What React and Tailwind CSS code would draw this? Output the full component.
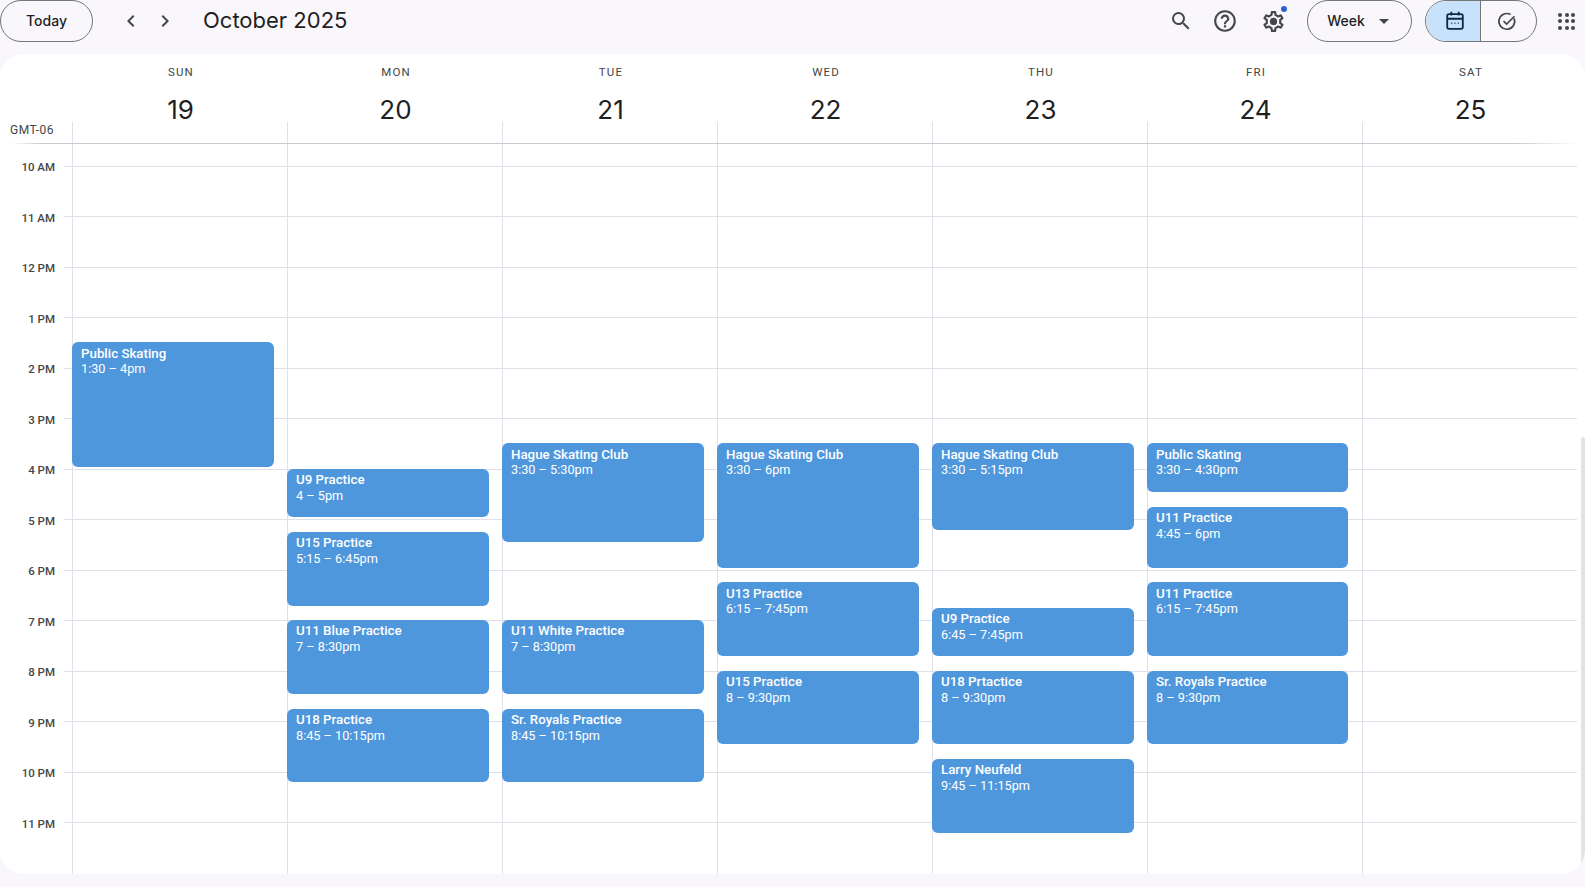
import React from "react";
import { MdChevronLeft, MdChevronRight, MdArrowDropDown, MdHelpOutline } from "react-icons/md";

const sans = "font-['Roboto','Liberation_Sans',sans-serif]";
const display = "font-['Inter','Liberation_Sans',sans-serif]";

const days = [
  { name: "SUN", num: 19, events: [{ title: "Public Skating", time: "1:30 – 4pm", from: 13.5, to: 16 }] },
  {
    name: "MON",
    num: 20,
    events: [
      { title: "U9 Practice", time: "4 – 5pm", from: 16, to: 17 },
      { title: "U15 Practice", time: "5:15 – 6:45pm", from: 17.25, to: 18.75 },
      { title: "U11 Blue Practice", time: "7 – 8:30pm", from: 19, to: 20.5 },
      { title: "U18 Practice", time: "8:45 – 10:15pm", from: 20.75, to: 22.25 },
    ],
  },
  {
    name: "TUE",
    num: 21,
    events: [
      { title: "Hague Skating Club", time: "3:30 – 5:30pm", from: 15.5, to: 17.5 },
      { title: "U11 White Practice", time: "7 – 8:30pm", from: 19, to: 20.5 },
      { title: "Sr. Royals Practice", time: "8:45 – 10:15pm", from: 20.75, to: 22.25 },
    ],
  },
  {
    name: "WED",
    num: 22,
    events: [
      { title: "Hague Skating Club", time: "3:30 – 6pm", from: 15.5, to: 18 },
      { title: "U13 Practice", time: "6:15 – 7:45pm", from: 18.25, to: 19.75 },
      { title: "U15 Practice", time: "8 – 9:30pm", from: 20, to: 21.5 },
    ],
  },
  {
    name: "THU",
    num: 23,
    events: [
      { title: "Hague Skating Club", time: "3:30 – 5:15pm", from: 15.5, to: 17.25 },
      { title: "U9 Practice", time: "6:45 – 7:45pm", from: 18.75, to: 19.75 },
      { title: "U18 Prtactice", time: "8 – 9:30pm", from: 20, to: 21.5 },
      { title: "Larry Neufeld", time: "9:45 – 11:15pm", from: 21.75, to: 23.25 },
    ],
  },
  {
    name: "FRI",
    num: 24,
    narrow: true,
    events: [
      { title: "Public Skating", time: "3:30 – 4:30pm", from: 15.5, to: 16.5 },
      { title: "U11 Practice", time: "4:45 – 6pm", from: 16.75, to: 18 },
      { title: "U11 Practice", time: "6:15 – 7:45pm", from: 18.25, to: 19.75 },
      { title: "Sr. Royals Practice", time: "8 – 9:30pm", from: 20, to: 21.5 },
    ],
  },
  { name: "SAT", num: 25, events: [] },
];

const hours = ["10 AM", "11 AM", "12 PM", "1 PM", "2 PM", "3 PM", "4 PM", "5 PM", "6 PM", "7 PM", "8 PM", "9 PM", "10 PM", "11 PM"];

const HOUR_PX = 50.5;
// grid starts 22px above the 10 AM line
const toY = (h) => 22 + (h - 10) * HOUR_PX;

const Outlined = ({ className, children }) => (
  <div className={`flex items-center justify-center border border-[#747775] ${className}`}>{children}</div>
);

const SearchIcon = () => (
  <svg viewBox="0 0 24 24" className="w-6 h-6 fill-[#444746]">
    <path d="M15.5 14h-.79l-.28-.27A6.471 6.471 0 0 0 16 9.5 6.5 6.5 0 1 0 9.5 16c1.61 0 3.09-.59 4.23-1.57l.27.28v.79l5 4.99L20.49 19l-4.99-5zm-6 0C7.01 14 5 11.99 5 9.5S7.01 5 9.5 5 14 7.01 14 9.5 11.99 14 9.5 14z" />
  </svg>
);

const GearIcon = () => (
  <div className="relative w-[25px] h-[25px]">
    <svg viewBox="0 0 24 24" className="w-[25px] h-[25px] fill-[#444746]">
      <path d="M19.43 12.98c.04-.32.07-.64.07-.98s-.03-.66-.07-.98l2.11-1.65c.19-.15.24-.42.12-.64l-2-3.46a.5.5 0 0 0-.61-.22l-2.49 1c-.52-.4-1.08-.73-1.69-.98l-.38-2.65A.49.49 0 0 0 14 2h-4c-.25 0-.46.18-.49.42l-.38 2.65c-.61.25-1.17.59-1.69.98l-2.49-1a.57.57 0 0 0-.18-.03.5.5 0 0 0-.43.25l-2 3.46c-.13.22-.07.49.12.64l2.11 1.65c-.04.32-.07.65-.07.98s.03.66.07.98l-2.11 1.65c-.19.15-.24.42-.12.64l2 3.46a.5.5 0 0 0 .61.22l2.49-1c.52.4 1.08.73 1.69.98l.38 2.65c.03.24.24.42.49.42h4c.25 0 .46-.18.49-.42l.38-2.65c.61-.25 1.17-.59 1.69-.98l2.49 1c.06.02.12.03.18.03.17 0 .34-.09.43-.25l2-3.46c.12-.22.07-.49-.12-.64l-2.11-1.65zm-1.98-1.71c.04.31.05.52.05.73s-.02.43-.05.73l-.14 1.13.89.7 1.08.84-.7 1.21-1.27-.51-1.04-.42-.9.68c-.43.32-.84.56-1.25.73l-1.06.43-.16 1.13-.2 1.35h-1.4l-.19-1.35-.16-1.13-1.06-.43c-.43-.18-.83-.41-1.23-.71l-.91-.7-1.06.43-1.27.51-.7-1.21 1.08-.84.89-.7-.14-1.13c-.03-.31-.05-.54-.05-.74s.02-.43.05-.73l.14-1.13-.89-.7-1.08-.84.7-1.21 1.27.51 1.04.42.9-.68c.43-.32.84-.56 1.25-.73l1.06-.43.16-1.13.2-1.35h1.39l.19 1.35.16 1.13 1.06.43c.43.18.83.41 1.23.71l.91.7 1.06-.43 1.27-.51.7 1.21-1.07.85-.89.7.14 1.13z" />
      <circle cx="12" cy="12" r="3.5" />
    </svg>
    <span className="absolute -top-[3px] -right-[1px] w-[6px] h-[6px] rounded-full bg-[#2f5fd0]" />
  </div>
);

const CalendarIcon = () => (
  <svg viewBox="0 0 24 24" className="w-[22px] h-[22px] fill-none stroke-[#0b2a4a]" strokeWidth="2">
    <rect x="3.5" y="4.5" width="17" height="16" rx="2" />
    <path d="M3.5 9.5h17M8 2v4M16 2v4" />
    <path d="M8 14.5h1M11.5 14.5h1M15 14.5h1" strokeWidth="1.6" />
  </svg>
);

const TaskIcon = () => (
  <svg viewBox="0 0 24 24" className="w-[21px] h-[21px] fill-none stroke-[#444746]" strokeWidth="1.9">
    <path d="M19.5 8.5A9 9 0 1 1 15.5 4" />
    <path d="M7.5 11.5l3.5 3.5 9-9" />
  </svg>
);

const AppsIcon = () => (
  <div className="grid grid-cols-3 gap-[2.5px]">
    {[0, 1, 2, 3, 4, 5, 6, 7, 8].map((i) => (
      <span key={i} className="w-[4px] h-[4px] rounded-full bg-[#444746]" />
    ))}
  </div>
);

const EventCard = ({ event, narrow }) => (
  <div
    className="absolute -left-px rounded-[6px] bg-[#4f97dd] px-[9px] pt-[3.25px] text-white overflow-hidden"
    style={{ top: toY(event.from) - 0.3, height: (event.to - event.from) * HOUR_PX - 2.05, width: narrow ? 201 : 202 }}
  >
    <div className="text-[13.3px] leading-[16px] font-medium">{event.title}</div>
    <div className="-mt-[0.25px] text-[12.7px] leading-[16px]">{event.time}</div>
  </div>
);

export default function App() {
  return (
    <div className={`h-screen w-full flex flex-col overflow-hidden bg-[#f9f7fc] text-[#1f1f1f] ${sans}`}>
      {/* Top bar */}
      <header className="h-[54px] shrink-0 flex items-start">
        <Outlined className={`w-[93px] h-[42px] pb-[2px] rounded-full text-[14px] font-medium ${display}`}>Today</Outlined>
        <div className="flex items-center h-[42px] ml-[26px] gap-[10px] text-[#444746]">
          <MdChevronLeft className="w-6 h-6" />
          <MdChevronRight className="w-6 h-6" />
        </div>
        <h1 className={`h-[42px] pb-[2px] ml-[26px] flex items-center text-[22px] font-normal ${display}`}>October 2025</h1>

        <div className="ml-auto flex items-start">
          <div className="flex items-center h-[42px]">
            <SearchIcon />
            <MdHelpOutline className="ml-[19px] w-[26px] h-[26px] text-[#444746]" />
            <div className="ml-[23px]">
              <GearIcon />
            </div>
          </div>
          <Outlined className={`w-[105px] h-[42px] ml-[21px] rounded-full text-[14px] font-medium gap-[7px] pl-[4px] ${display}`}>
            <span className="pb-[2px]">Week</span>
            <MdArrowDropDown className="w-6 h-6 text-[#444746]" />
          </Outlined>
          <div className="flex w-[112px] h-[42px] ml-[13px] rounded-full border border-[#747775] overflow-hidden">
            <div className="w-[55px] shrink-0 flex items-center justify-center pl-[4px] bg-[#c9e2fb] border-r border-[#747775]">
              <CalendarIcon />
            </div>
            <div className="w-[55px] shrink-0 flex items-center justify-center pr-[3px]">
              <TaskIcon />
            </div>
          </div>
          <div className="flex items-center h-[42px] ml-[21px] mr-[10px]">
            <AppsIcon />
          </div>
        </div>
      </header>

      {/* Calendar panel */}
      <main className="relative flex-1 bg-white rounded-t-3xl rounded-b-3xl flex flex-col overflow-hidden">
        {/* Day headers */}
        <div className="flex h-[89px] shrink-0">
          <div className="w-[72px] shrink-0 flex flex-col justify-end pb-[6px] pl-[10px] text-[12px] leading-[14px] font-normal tracking-[0.04em] text-[#444746]">
            GMT-06
          </div>
          {days.map((d) => (
            <div key={d.name} className="w-[215px] shrink-0 flex flex-col">
              <div className="pl-[3px] pt-[12px] text-center text-[11.5px] leading-[13px] font-normal tracking-[0.1em] text-[#444746]">
                {d.name}
              </div>
              <div className={`pl-[2px] pt-[18px] text-center text-[26px] leading-[25px] ${display}`}>{d.num}</div>
              <div className="flex-1 w-px bg-[#e0e0ea]" />
            </div>
          ))}
        </div>
        <div className="h-px ml-[10px] w-[1567px] shrink-0 bg-[linear-gradient(to_right,transparent,#c8c8d2_2%,#c8c8d2_96%,transparent)]" />

        {/* Time grid */}
        <div className="relative flex-1">
          <div className="h-[21.9px]" />
          {hours.map((h) => (
            <div key={h} className="flex h-[50.5px]">
              <div className="w-[64px] shrink-0 pr-[9px] -mt-[5.6px] text-right text-[11.5px] leading-[14px] font-medium text-[#444746]">
                {h}
              </div>
              <div className="w-[1513px] h-px bg-[#e0e0ea]" />
            </div>
          ))}

          {/* Day columns over the hour lines */}
          <div className="absolute inset-y-0 left-[72px] flex">
            {days.map((d) => (
              <div key={d.name} className="relative w-[215px] border-l border-[#e0e0ea]">
                {d.events.map((e) => (
                  <EventCard key={e.title + e.from} event={e} narrow={d.narrow} />
                ))}
              </div>
            ))}
          </div>
        </div>

        {/* Scrollbar */}
        <div className="absolute right-0 top-[383px] bottom-[6px] w-[4px] rounded-t-sm bg-[#e6e2e4]" />
      </main>

      <div className="h-[13px] shrink-0" />
    </div>
  );
}
